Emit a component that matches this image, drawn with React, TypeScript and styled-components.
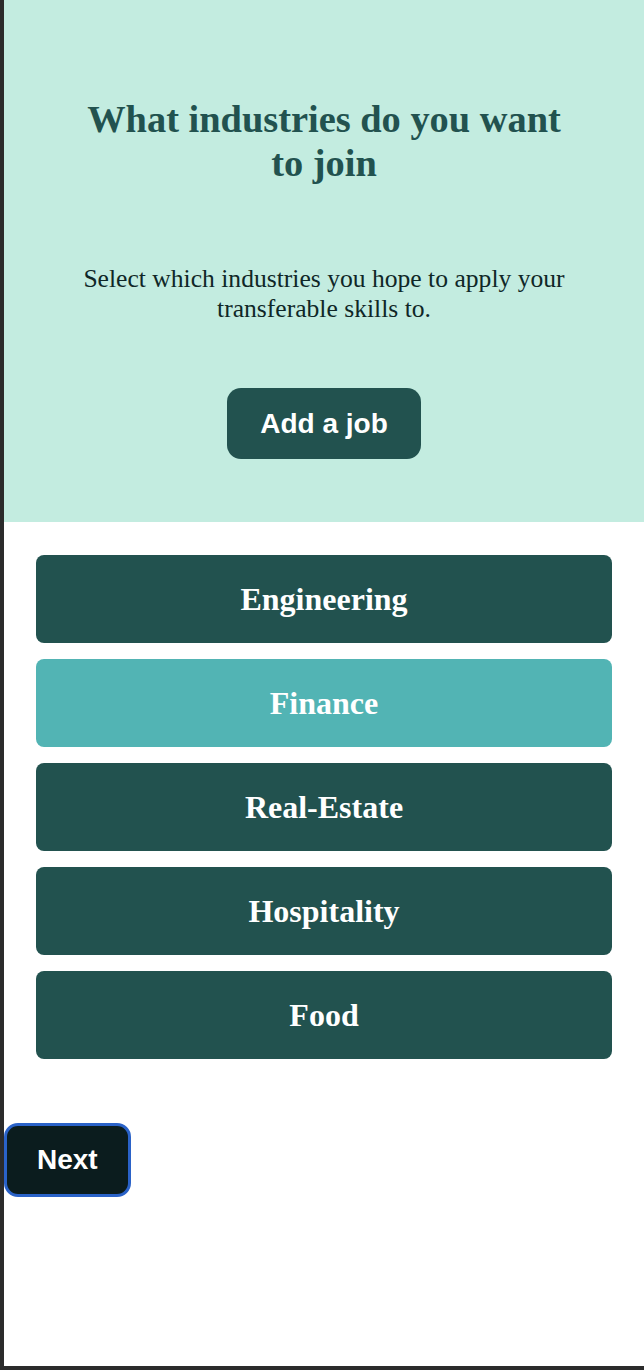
import React, { useState } from "react";
import styled, { createGlobalStyle } from "styled-components";

const GlobalStyle = createGlobalStyle`
  html, body {
    margin: 0;
    padding: 0;
    background: #2b2b2b;
  }
  * {
    box-sizing: border-box;
  }
`;

const Frame = styled.div`
  margin-left: 4px;
  width: 640px;
  height: 1366px;
  background: #ffffff;
  overflow: hidden;
`;

const Hero = styled.section`
  background: #c3ece0;
  padding: 97px 40px 63px;
  display: flex;
  flex-direction: column;
  align-items: center;
  text-align: center;
`;

const Title = styled.h1`
  margin: 0;
  font-family: "Liberation Serif", "Times New Roman", serif;
  font-weight: 700;
  font-size: 38.4px;
  line-height: 44px;
  color: #22524f;
  max-width: 490px;
`;

const Lead = styled.p`
  margin: 79px 0 0;
  font-family: "Liberation Serif", "Times New Roman", serif;
  font-size: 25.6px;
  line-height: 30px;
  color: #0f2727;
  max-width: 500px;
`;

const AddButton = styled.button`
  margin-top: 64px;
  height: 71px;
  padding: 0 33px;
  border: none;
  border-radius: 14px;
  background: #22524f;
  color: #ffffff;
  font-family: "Liberation Sans", Arial, sans-serif;
  font-weight: 700;
  font-size: 28px;
  cursor: pointer;
`;

const List = styled.div`
  padding: 33px 32px 0;
  display: flex;
  flex-direction: column;
  gap: 16px;
`;

const Industry = styled.button<{ selected: boolean }>`
  height: 88px;
  width: 100%;
  border: none;
  border-radius: 8px;
  background: ${(props) => (props.selected ? "#52b4b4" : "#22524f")};
  color: #ffffff;
  font-family: "Liberation Serif", "Times New Roman", serif;
  font-weight: 700;
  font-size: 32px;
  cursor: pointer;
`;

const NextButton = styled.button`
  margin-top: 64px;
  height: 74px;
  padding: 0 30px;
  border: 3px solid #2a62c8;
  border-radius: 14px;
  background: #0b1c1e;
  color: #ffffff;
  font-family: "Liberation Sans", Arial, sans-serif;
  font-weight: 700;
  font-size: 28px;
  cursor: pointer;
`;

const industries = ["Engineering", "Finance", "Real-Estate", "Hospitality", "Food"];

const App = () => {
  const [selected, setSelected] = useState<string>("Finance");

  return (
    <>
      <GlobalStyle />
      <Frame>
        <Hero>
          <Title>What industries do you want to join</Title>
          <Lead>
            Select which industries you hope to apply your transferable skills to.
          </Lead>
          <AddButton>Add a job</AddButton>
        </Hero>

        <List>
          {industries.map((name) => (
            <Industry
              key={name}
              selected={selected === name}
              onClick={() => setSelected(name)}
            >
              {name}
            </Industry>
          ))}
        </List>

        <NextButton>Next</NextButton>
      </Frame>
    </>
  );
};

export default App;
